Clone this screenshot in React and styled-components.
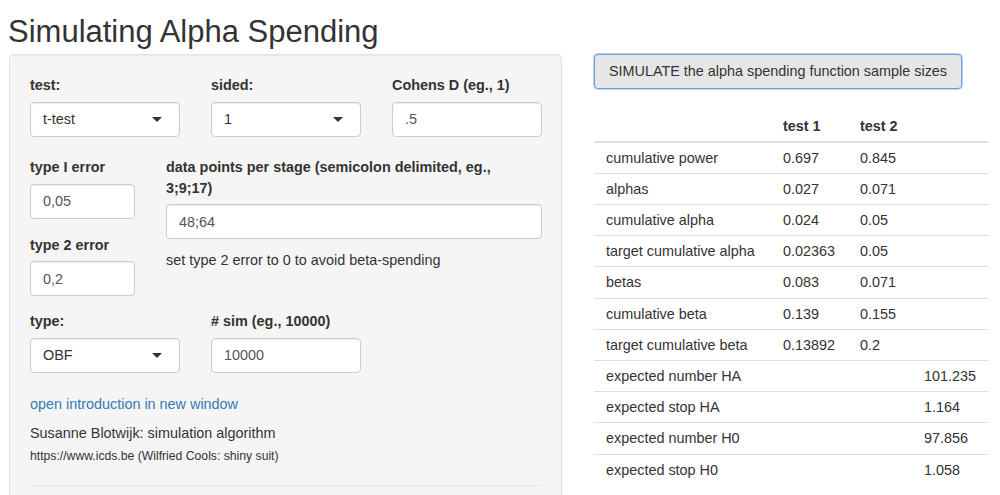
import styled, { createGlobalStyle } from 'styled-components';

const GlobalStyle = createGlobalStyle`
  html, body {
    margin: 0;
    padding: 0;
    background: #fff;
    overflow: hidden;
  }
  body {
    font-family: "Liberation Sans", Arial, Helvetica, sans-serif;
    font-size: 14.4px;
    line-height: 20.6px;
    color: #333;
  }
  * {
    box-sizing: border-box;
  }
`;

const Page = styled.div`
  height: 495px;
  padding: 0 12px 0 9px;
  overflow: hidden;
`;

const Title = styled.h2`
  margin: 15px 0 5px -1px;
  font-size: 31px;
  font-weight: 400;
  line-height: 34px;
`;

const Layout = styled.div`
  display: grid;
  grid-template-columns: 553px 394px;
  column-gap: 32px;
  align-items: start;
`;

//# sidebar well
const Well = styled.div`
  min-height: 480px;
  padding: 20px 20px 40px;
  background: #f5f5f5;
  border: 1px solid #e3e3e3;
  border-radius: 4px;
  box-shadow: inset 0 1px 1px rgba(0, 0, 0, 0.05);
`;

const FieldRow = styled.div`
  display: grid;
  grid-template-columns: ${(p) => p.$cols};
  column-gap: 31px;
  margin-bottom: ${(p) => p.$mb || 0}px;
`;

const Group = styled.div`
  margin-top: ${(p) => p.$mt || 0}px;
`;

const Label = styled.label`
  display: block;
  max-width: ${(p) => p.$max || 'none'};
  margin-bottom: 6px;
  font-weight: bold;
`;

const Input = styled.div`
  display: flex;
  align-items: center;
  justify-content: space-between;
  height: 35px;
  padding: 0 12px;
  background: #fff;
  border: 1px solid #ccc;
  border-radius: 4px;
  box-shadow: inset 0 1px 1px rgba(0, 0, 0, 0.075);
  color: ${(p) => (p.$select ? '#333' : '#555')};
`;

const Caret = styled.span`
  width: 0;
  height: 0;
  margin: 1px 5px 0 0;
  border-style: solid;
  border-width: 5px 5px 0 5px;
  border-color: #333 transparent transparent transparent;
`;

const HelpText = styled.div`
  margin-top: 10.6px;
`;

const Link = styled.a`
  display: block;
  margin-top: 21px;
  color: #337ab7;
  text-decoration: none;
`;

const Credit = styled.div`
  margin-top: 8.4px;
`;

const Small = styled.div`
  margin-top: 5px;
  font-size: 12.2px;
  line-height: 17.5px;
`;

const Rule = styled.hr`
  margin: 19px 0 0;
  border: 0;
  border-top: 1px solid #e6e6e6;
`;

const Main = styled.div`
  display: flex;
  flex-direction: column;
  align-items: flex-start;
`;

const Button = styled.button`
  width: 368px;
  height: 35px;
  padding: 0;
  font: inherit;
  color: #333;
  background: #e6e6e6;
  border: 1px solid #6f9fdc;
  border-radius: 4px;
  box-shadow: 0 0 0 1px #b9d0f0;
  cursor: pointer;
`;

const Table = styled.table`
  width: 394px;
  margin-top: 21.5px;
  border-collapse: collapse;
  table-layout: fixed;
`;

const Col = styled.col`
  width: ${(p) => p.$w}px;
`;

const Th = styled.th`
  padding: 5px 12px;
  line-height: 20px;
  text-align: left;
  font-weight: bold;
  border-bottom: 2px solid #ddd;
`;

const Td = styled.td`
  padding: 5px 12px;
  line-height: 20.2px;
  white-space: nowrap;
  border-top: 1px solid #ddd;
`;

const rows = [
  ['cumulative power', '0.697', '0.845', ''],
  ['alphas', '0.027', '0.071', ''],
  ['cumulative alpha', '0.024', '0.05', ''],
  ['target cumulative alpha', '0.02363', '0.05', ''],
  ['betas', '0.083', '0.071', ''],
  ['cumulative beta', '0.139', '0.155', ''],
  ['target cumulative beta', '0.13892', '0.2', ''],
  ['expected number HA', '', '', '101.235'],
  ['expected stop HA', '', '', '1.164'],
  ['expected number H0', '', '', '97.856'],
  ['expected stop H0', '', '', '1.058'],
];

const Select = ({ value }) => (
  <Input $select>
    <span>{value}</span>
    <Caret />
  </Input>
);

export default function App() {
  return (
    <Page>
      <GlobalStyle />
      <Title>Simulating Alpha Spending</Title>
      <Layout>
        <Well>
          <FieldRow $cols="150px 150px 150px" $mb={20.6}>
            <Group>
              <Label>test:</Label>
              <Select value="t-test" />
            </Group>
            <Group>
              <Label>sided:</Label>
              <Select value="1" />
            </Group>
            <Group>
              <Label>Cohens D (eg., 1)</Label>
              <Input>.5</Input>
            </Group>
          </FieldRow>

          <FieldRow $cols="105px 376px" $mb={14.6}>
            <div>
              <Group>
                <Label>type I error</Label>
                <Input>0,05</Input>
              </Group>
              <Group $mt={16}>
                <Label>type 2 error</Label>
                <Input>0,2</Input>
              </Group>
            </div>
            <div>
              <Group>
                <Label $max="350px">data points per stage (semicolon delimited, eg., 3;9;17)</Label>
                <Input>48;64</Input>
              </Group>
              <HelpText>set type 2 error to 0 to avoid beta-spending</HelpText>
            </div>
          </FieldRow>

          <FieldRow $cols="150px 150px">
            <Group>
              <Label>type:</Label>
              <Select value="OBF" />
            </Group>
            <Group>
              <Label># sim (eg., 10000)</Label>
              <Input>10000</Input>
            </Group>
          </FieldRow>

          <Link href="#">open introduction in new window</Link>
          <Credit>Susanne Blotwijk: simulation algorithm</Credit>
          <Small>https://www.icds.be (Wilfried Cools: shiny suit)</Small>
          <Rule />
        </Well>

        <Main>
          <Button>SIMULATE the alpha spending function sample sizes</Button>
          <Table>
            <colgroup>
              <Col $w={177} />
              <Col $w={77} />
              <Col $w={64} />
              <Col $w={76} />
            </colgroup>
            <thead>
              <tr>
                <Th />
                <Th>test 1</Th>
                <Th>test 2</Th>
                <Th />
              </tr>
            </thead>
            <tbody>
              {rows.map((r) => (
                <tr key={r[0]}>
                  {r.map((c, i) => (
                    <Td key={i}>{c}</Td>
                  ))}
                </tr>
              ))}
            </tbody>
          </Table>
        </Main>
      </Layout>
    </Page>
  );
}
